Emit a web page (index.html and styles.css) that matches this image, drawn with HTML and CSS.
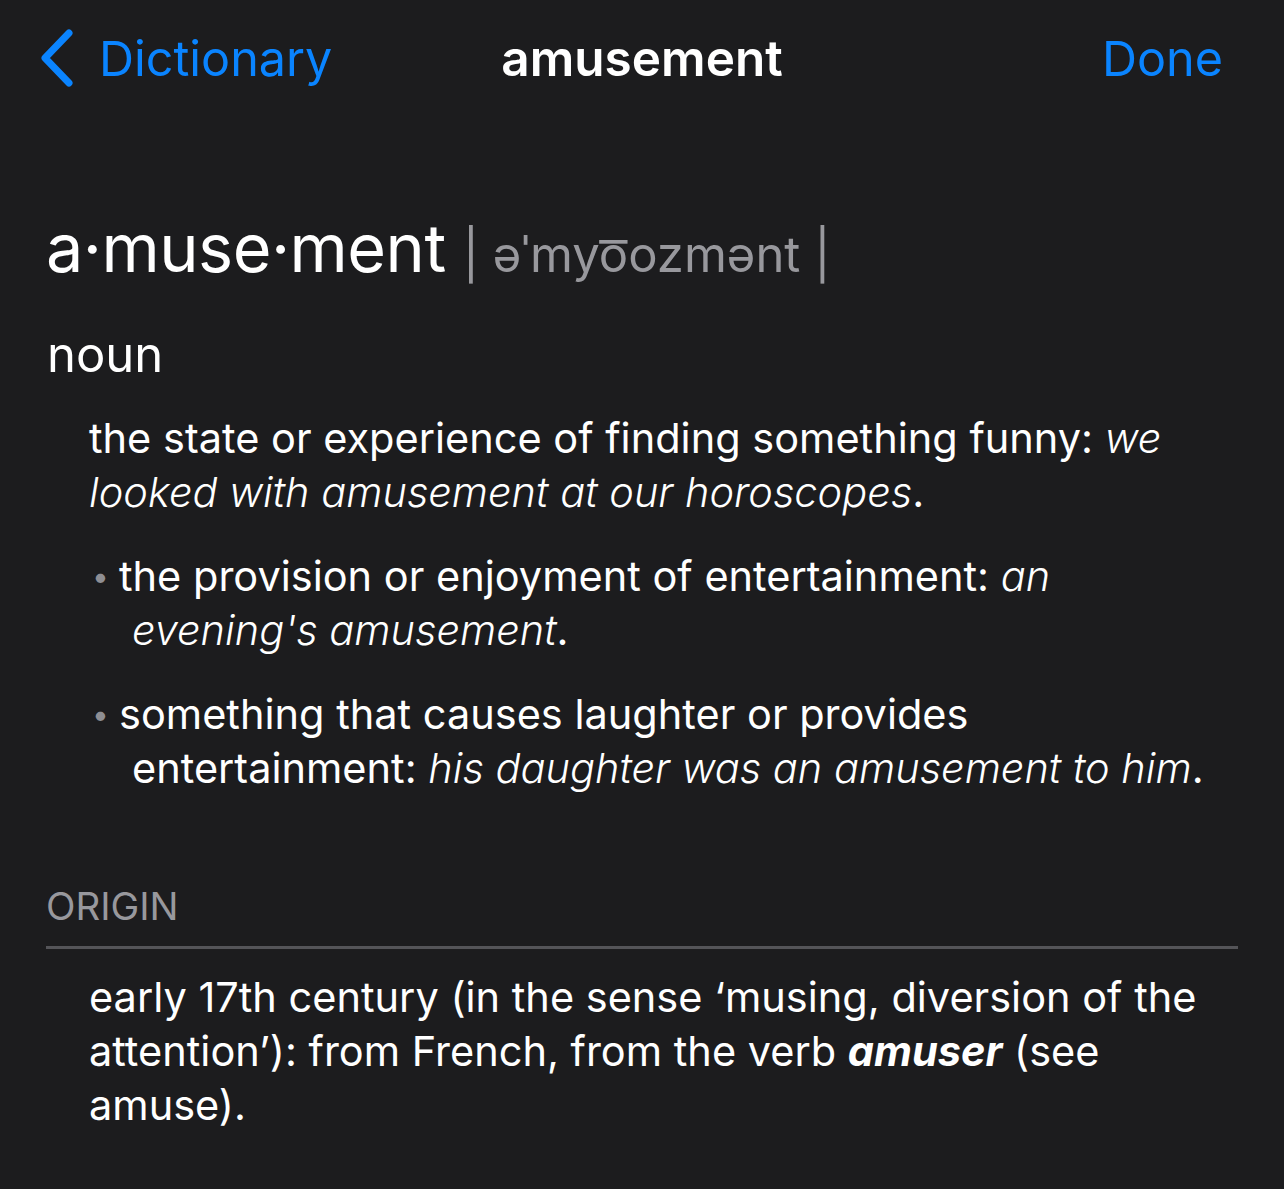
FILE: index.html
```html
<!DOCTYPE html>
<html lang="en">
<head>
<meta charset="utf-8">
<title>amusement</title>
<link rel="stylesheet" href="styles.css">
</head>
<body>
<header class="nav">
  <a class="nav-back" href="#">
    <svg class="chev" width="34" height="58" viewBox="0 0 34 58"><path d="M29 4 L5 29 L29 54" fill="none" stroke="#0a84ff" stroke-width="7" stroke-linecap="round" stroke-linejoin="round"/></svg>
    <span>Dictionary</span>
  </a>
  <div class="nav-title">amusement</div>
  <a class="nav-done" href="#">Done</a>
</header>
<main class="entry">
  <h1 class="head"><span class="hw">a·muse·ment</span> <span class="pron">| əˈmyo͞ozmənt |</span></h1>
  <div class="pos">noun</div>
  <p class="def">the state or experience of finding something funny: <i>we looked with amusement at our horoscopes</i>.</p>
  <p class="sub"><span class="bul">•</span>the provision or enjoyment of entertainment: <i>an evening's amusement</i>.</p>
  <p class="sub"><span class="bul">•</span>something that causes laughter or provides entertainment: <i>his daughter was an amusement to him</i>.</p>
  <div class="sect">ORIGIN</div>
  <p class="origin">early 17th century (in the sense ‘musing, diversion of the attention’): from French, from the verb <b><i>amuser</i></b> (see amuse).</p>
</main>
</body>
</html>
```
FILE: styles.css
```css
html, body {
  margin: 0;
  background: #1c1c1e;
}
body {
  font-family: Inter, "Noto Sans", sans-serif;
  color: #ffffff;
  -webkit-font-smoothing: antialiased;
}
.nav {
  height: 116px;
  display: flex;
  align-items: center;
  justify-content: space-between;
  padding: 0 61px 0 40px;
  position: relative;
}
.nav a {
  color: #0a84ff;
  text-decoration: none;
  font-size: 48.5px;
  font-weight: 400;
}
.nav-back {
  display: flex;
  align-items: center;
  gap: 25px;
}
.chev { display: block; }
.nav-title {
  position: absolute;
  left: 0;
  right: 0;
  text-align: center;
  font-size: 49.5px;
  font-weight: 600;
  pointer-events: none;
}
.entry {
  padding: 92px 46px 40px 46px;
}
.head {
  margin: 0;
  font-weight: 400;
  line-height: 80px;
  white-space: nowrap;
}
.hw {
  font-size: 66.5px;
  letter-spacing: -0.5px;
  margin-right: 8px;
}
.pron {
  font-size: 49px;
  color: #98989d;
}
.pos {
  font-size: 49px;
  margin-top: 24px;
  line-height: 60px;
  padding-left: 1px;
}
.def, .sub, .origin {
  font-size: 41.5px;
  line-height: 54px;
  margin: 0;
}
.def {
  margin-top: 26px;
  padding-left: 43px;
}
.def i, .sub i {
  font-weight: 300;
}
.sub {
  margin-top: 30px;
  padding-left: 86px;
  text-indent: -40px;
}
.bul {
  color: #8e8e93;
  font-size: 30px;
  display: inline-block;
  width: 27px;
  text-indent: 0;
  vertical-align: 4px;
}
.sect {
  margin-top: 86px;
  font-size: 38.5px;
  color: #98989d;
  line-height: 50px;
  padding-bottom: 15px;
  border-bottom: 3px solid #545458;
}
.origin {
  margin-top: 21px;
  padding-left: 43px;
}
.origin b { font-weight: 700; }
```
